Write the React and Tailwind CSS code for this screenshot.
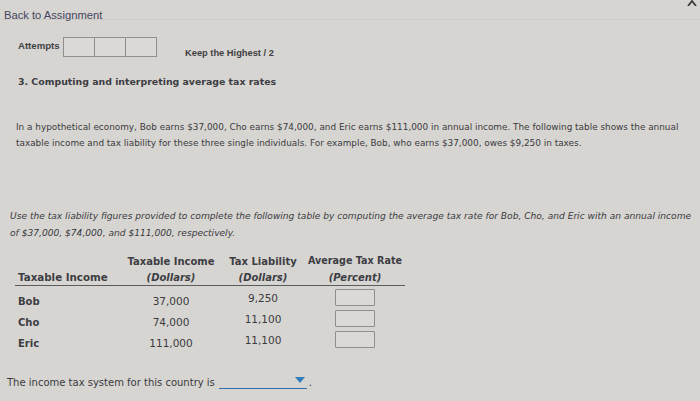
import React from 'react';

const rows = [
  { name: 'Bob', income: '37,000', tax: '9,250' },
  { name: 'Cho', income: '74,000', tax: '11,100' },
  { name: 'Eric', income: '111,000', tax: '11,100' },
];

const verdana = "font-['DejaVu_Sans',Verdana,sans-serif]";
const arial = "font-['Liberation_Sans',Arial,sans-serif]";

const App = () => {
  return (
    <div className="w-[700px] h-[401px] overflow-hidden bg-[#d7d5d1] text-[#3b3b3f] font-['DejaVu_Sans',sans-serif]">
      {/* header */}
      <div className="relative h-[20px] border-b border-[#cdcbc7] pl-[4px] pt-[2px]">
        <span className={`text-[11.2px] leading-[14px] text-[#45455e] ${arial}`}>
          Back to Assignment
        </span>
        <svg className="absolute right-[3px] top-[0px] w-[10px] h-[6px]" viewBox="0 0 10 6">
          <path d="M1 6 L5 1 L9 6" fill="none" stroke="#3a3a3a" strokeWidth="1.8" />
        </svg>
      </div>

      {/* attempts */}
      <div className="flex items-center mt-[16px] pl-[18px] h-[21px]">
        <span className={`text-[9.6px] font-bold text-[#3f3f44] w-[45px] ${arial}`}>
          Attempts
        </span>
        <div className="flex">
          {[0, 1, 2].map(i => (
            <div key={i} className="w-[32px] h-[20px] border border-[#8e8e8e] bg-[#dcdad6] -ml-px first:ml-0" />
          ))}
        </div>
        <span className={`ml-[28px] mt-[14px] text-[9.3px] font-bold text-[#3f3f44] ${arial}`}>
          Keep the Highest / 2
        </span>
      </div>

      {/* title */}
      <h2 className={`mt-[18px] pl-[18px] text-[9.4px] leading-[13px] font-bold text-[#3d3d44] ${verdana}`}>
        3. Computing and interpreting average tax rates
      </h2>

      {/* intro */}
      <p className={`mt-[31px] pl-[16px] pr-[10px] text-[8.9px] leading-[16px] text-[#3a3a3e] ${verdana}`}>
        In a hypothetical economy, Bob earns $37,000, Cho earns $74,000, and Eric earns $111,000 in annual income. The following table shows the annual taxable income and tax liability for these three single individuals. For example, Bob, who earns $37,000, owes $9,250 in taxes.
      </p>

      {/* instructions */}
      <p className={`mt-[57px] pl-[10px] pr-[6px] text-[9.1px] leading-[17px] italic text-[#3a3a3e] ${verdana}`}>
        Use the tax liability figures provided to complete the following table by computing the average tax rate for Bob, Cho, and Eric with an annual income of $37,000, $74,000, and $111,000, respectively.
      </p>

      {/* table */}
      <div className={`mt-[11px] ml-[15px] w-[390px] text-[10px] ${verdana}`}>
        <div className="grid grid-cols-[106px_100px_84px_100px] h-[17px] items-center font-bold text-[#3d3d44]">
          <div></div>
          <div className="text-center">Taxable Income</div>
          <div className="text-center">Tax Liability</div>
          <div className="text-center text-[9.6px]">Average Tax Rate</div>
        </div>
        <div className="grid grid-cols-[106px_100px_84px_100px] h-[16px] items-center font-bold border-b border-[#5c5c60] text-[#3d3d44]">
          <div className="pl-[3px] text-[10.3px]">Taxable Income</div>
          <div className="text-center italic">(Dollars)</div>
          <div className="text-center italic">(Dollars)</div>
          <div className="text-center italic">(Percent)</div>
        </div>
        <div className="mt-[2px]">
          {rows.map(r => (
            <div key={r.name} className="grid grid-cols-[106px_100px_84px_100px] h-[21px] items-start">
              <div className="pl-[3px] pt-[7px] leading-[13px] font-bold text-[#3d3d44]">{r.name}</div>
              <div className="text-center pt-[7px] leading-[13px] text-[10.5px]">{r.income}</div>
              <div className="text-center pt-[4px] leading-[13px] text-[10.5px]">{r.tax}</div>
              <div className="flex justify-center pt-[1px]">
                <div className="w-[40px] h-[17px] border border-[#8e8e8e] bg-[#dbd9d5] rounded-[1px]" />
              </div>
            </div>
          ))}
        </div>
      </div>

      {/* answer sentence */}
      <div className={`mt-[25px] pl-[7px] flex items-end text-[10px] leading-[13px] text-[#3a3a3e] ${verdana}`}>
        <span>The income tax system for this country is</span>
        <span className="relative ml-[4px] w-[88px] h-[11px] border-b border-[#2f6fb0]">
          <svg className="absolute right-[2px] top-[-1px] w-[10px] h-[6px]" viewBox="0 0 10 6">
            <path d="M0 0 H10 L5 6 Z" fill="#2f7fc0" />
          </svg>
        </span>
        <span className="ml-[2px]">.</span>
      </div>
    </div>
  );
};

export default App;
